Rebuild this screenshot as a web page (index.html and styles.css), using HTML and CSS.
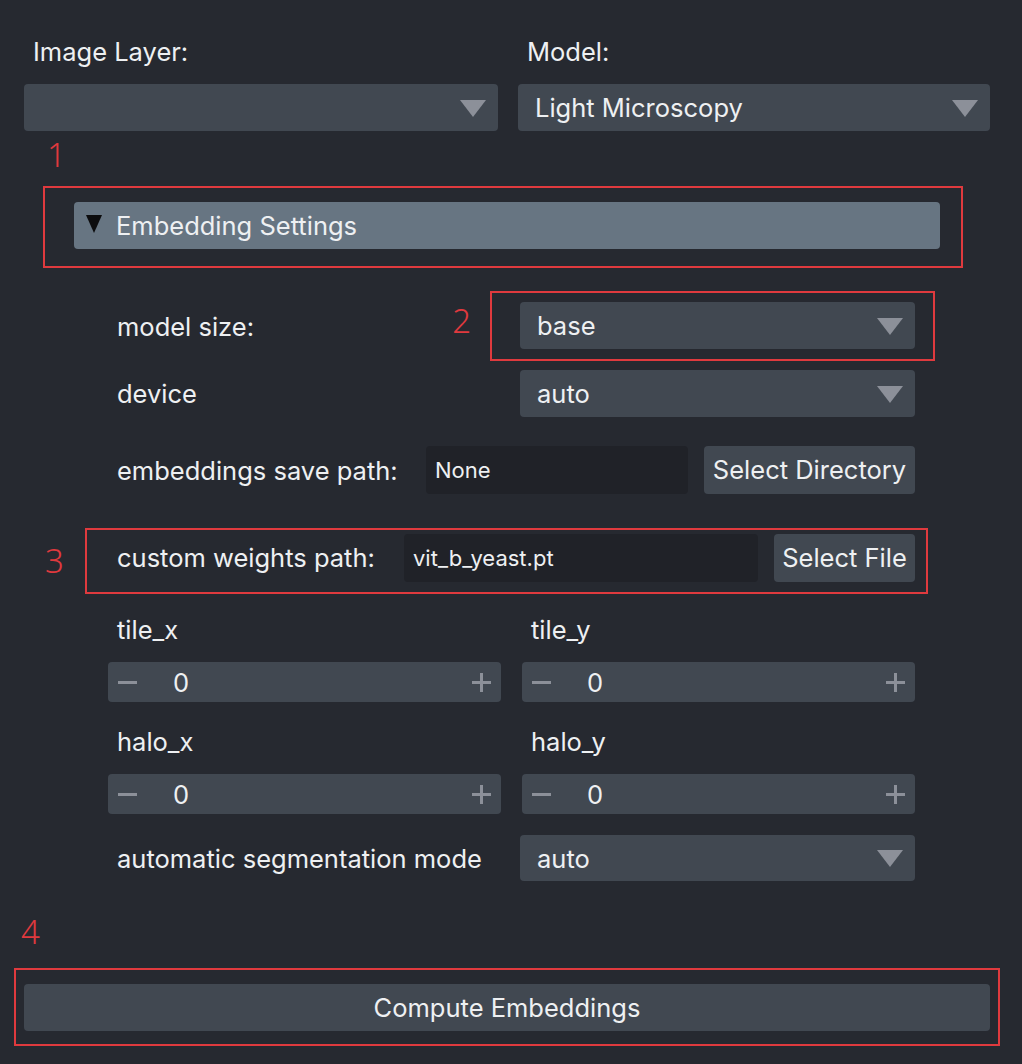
FILE: index.html
```html
<!DOCTYPE html>
<html>
<head>
<meta charset="utf-8">
<link rel="stylesheet" href="styles.css">
</head>
<body>
<div class="panel">
  <div class="top">
    <div class="col">
      <div class="toplabel">Image Layer:</div>
      <div class="combo"><span class="combo-text"></span><span class="arrow"></span></div>
    </div>
    <div class="col">
      <div class="toplabel">Model:</div>
      <div class="combo"><span class="combo-text">Light Microscopy</span><span class="arrow"></span></div>
    </div>
  </div>

  <div class="marker m1">1</div>
  <div class="redbox box1">
    <div class="header"><span class="tri"></span><span>Embedding Settings</span></div>
  </div>

  <div class="settings">
    <div class="row row-size">
      <div class="label">model size:</div>
      <div class="marker m2">2</div>
      <div class="redbox box2">
        <div class="combo w395"><span class="combo-text">base</span><span class="arrow"></span></div>
      </div>
    </div>
    <div class="row row-device">
      <div class="label">device</div>
      <div class="combo w395"><span class="combo-text">auto</span><span class="arrow"></span></div>
    </div>
    <div class="row row-save">
      <div class="label">embeddings save path:</div>
      <div class="field f-save">None</div>
      <div class="btn b-dir">Select Directory</div>
    </div>
  </div>

  <div class="row3">
    <div class="marker m3">3</div>
    <div class="redbox box3">
      <div class="label">custom weights path:</div>
      <div class="field f-weights">vit_b_yeast.pt</div>
      <div class="btn b-file">Select File</div>
    </div>
  </div>

  <div class="settings">
    <div class="grid2">
      <div class="cell">
        <div class="slabel">tile_x</div>
        <div class="spin"><span class="minus"></span><span class="val">0</span><span class="plus"></span></div>
      </div>
      <div class="cell">
        <div class="slabel">tile_y</div>
        <div class="spin"><span class="minus"></span><span class="val">0</span><span class="plus"></span></div>
      </div>
      <div class="cell">
        <div class="slabel">halo_x</div>
        <div class="spin"><span class="minus"></span><span class="val">0</span><span class="plus"></span></div>
      </div>
      <div class="cell">
        <div class="slabel">halo_y</div>
        <div class="spin"><span class="minus"></span><span class="val">0</span><span class="plus"></span></div>
      </div>
    </div>
    <div class="row row-mode">
      <div class="label">automatic segmentation mode</div>
      <div class="combo w395"><span class="combo-text">auto</span><span class="arrow"></span></div>
    </div>
  </div>

  <div class="marker m4">4</div>
  <div class="redbox box4">
    <div class="btn compute">Compute Embeddings</div>
  </div>
</div>
</body>
</html>
```

FILE: styles.css
```css
* { box-sizing: border-box; }
html, body { margin: 0; padding: 0; }
body {
  background: #262930;
  width: 1022px;
  height: 1064px;
  overflow: hidden;
  font-family: Inter, "Noto Sans", "Liberation Sans", sans-serif;
  font-size: 25.5px;
  color: #eef0f2;
}
.panel { position: relative; padding-top: 36px; }

.top {
  display: grid;
  grid-template-columns: 474px 472px;
  column-gap: 20px;
  padding-left: 24px;
}
.toplabel {
  height: 32px;
  line-height: 32px;
  padding-left: 9px;
  margin-bottom: 16px;
}
.combo {
  height: 47px;
  background: #414851;
  border-radius: 4px;
  display: flex;
  align-items: center;
  justify-content: space-between;
  padding: 0 12px 0 17px;
}
.combo-text { line-height: 47px; }
.arrow {
  width: 0; height: 0;
  border-left: 13px solid transparent;
  border-right: 13px solid transparent;
  border-top: 17px solid #8c9099;
  margin-top: 1px;
}
.w395 { width: 395px; }

.marker {
  color: #e0393e;
  font-family: "Noto Sans", "Open Sans", sans-serif;
  font-weight: 300;
  font-size: 33px;
  line-height: 36px;
}
.m1 { margin: 6px 0 0 47px; height: 49px; }

.redbox { border: 2px solid #df3a3e; }
.box1 {
  margin-left: 43px;
  width: 920px;
  height: 82px;
  padding: 14px 0 0 29px;
}
.header {
  width: 866px;
  height: 47px;
  background: #677582;
  border-radius: 4px;
  display: flex;
  align-items: center;
  padding-left: 12px;
}
.tri {
  width: 0; height: 0;
  border-left: 8.5px solid transparent;
  border-right: 8.5px solid transparent;
  border-top: 18px solid #0c0c0e;
  margin-right: 14px;
  margin-top: -4px;
}

.settings { margin-left: 108px; width: 807px; }
.row { display: flex; align-items: center; }
.label { padding-left: 9px; flex: 1; white-space: nowrap; }
.row-size { margin-top: 23px; height: 70px; }
.m2 { margin-right: 19px; margin-top: -10px; }
.box2 {
  width: 445px;
  height: 70px;
  margin-right: -20px;
  padding: 9px 0 0 28px;
}
.row-device { margin-top: 9px; height: 47px; }
.row-save { margin-top: 29px; height: 48px; }
.field {
  background: #202228;
  border-radius: 4px;
  height: 48px;
  line-height: 48px;
  font-size: 22px;
  padding-left: 9px;
}
.f-save { width: 262px; margin-right: 16px; }
.btn {
  background: #414851;
  border-radius: 4px;
  height: 48px;
  line-height: 48px;
  text-align: center;
  white-space: nowrap;
}
.b-dir { width: 211px; }

.row3 {
  display: flex;
  align-items: center;
  margin-top: 34px;
  height: 66px;
}
.m3 { margin-left: 45px; width: 40px; }
.box3 {
  width: 843px;
  height: 66px;
  display: flex;
  align-items: flex-start;
  padding: 4px 11px 0 0;
}
.box3 .label { padding-left: 30px; line-height: 48px; }
.f-weights { width: 354px; margin-right: 16px; }
.b-file { width: 141px; }

.grid2 {
  display: grid;
  grid-template-columns: 393px 393px;
  column-gap: 21px;
  row-gap: 22px;
  margin-top: 18px;
}
.cell { height: 90px; }
.slabel { height: 50px; line-height: 36px; padding-left: 9px; }
.spin {
  height: 40px;
  background: #414851;
  border-radius: 4px;
  display: flex;
  align-items: center;
  padding: 0 10px;
}
.val { margin-left: 36px; flex: 1; }
.minus { width: 19px; height: 3px; background: #8c9099; }
.plus {
  width: 19px; height: 19px;
  background:
    linear-gradient(#8c9099, #8c9099) center / 19px 3px no-repeat,
    linear-gradient(#8c9099, #8c9099) center / 3px 19px no-repeat;
}
.row-mode { margin-top: 21px; height: 46px; }
.row-mode .combo { height: 46px; }

.m4 { margin: 33px 0 0 21px; height: 54px; }
.box4 {
  margin-left: 14px;
  width: 986px;
  height: 78px;
  padding: 14px 0 0 8px;
}
.compute { width: 966px; height: 47px; line-height: 47px; }
```
